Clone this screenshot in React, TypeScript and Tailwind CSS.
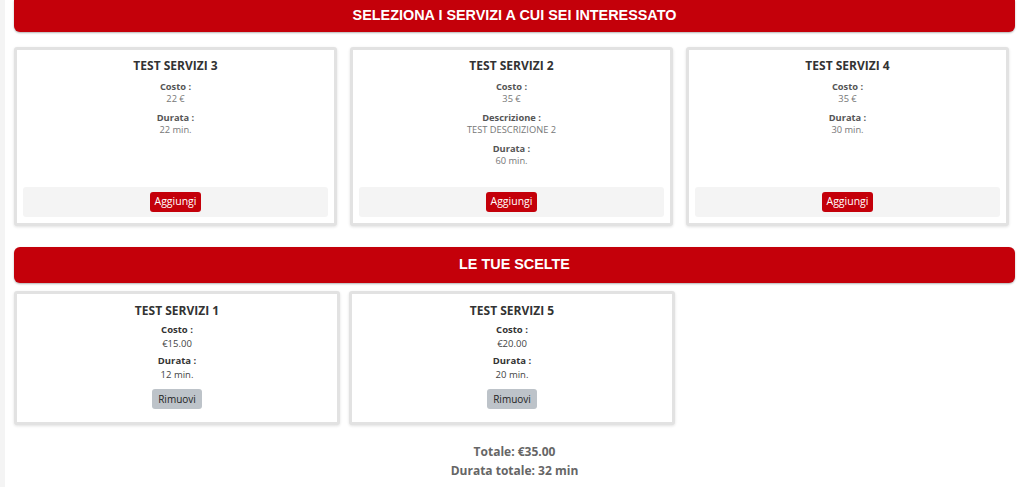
import React from 'react';

interface Field {
  label: string;
  value: string;
}

interface Service {
  name: string;
  fields: Field[];
}

const available: Service[] = [
  { name: 'TEST SERVIZI 3', fields: [{ label: 'Costo :', value: '22 €' }, { label: 'Durata :', value: '22 min.' }] },
  {
    name: 'TEST SERVIZI 2',
    fields: [
      { label: 'Costo :', value: '35 €' },
      { label: 'Descrizione :', value: 'TEST DESCRIZIONE 2' },
      { label: 'Durata :', value: '60 min.' },
    ],
  },
  { name: 'TEST SERVIZI 4', fields: [{ label: 'Costo :', value: '35 €' }, { label: 'Durata :', value: '30 min.' }] },
];

const chosen: Service[] = [
  { name: 'TEST SERVIZI 1', fields: [{ label: 'Costo :', value: '€15.00' }, { label: 'Durata :', value: '12 min.' }] },
  { name: 'TEST SERVIZI 5', fields: [{ label: 'Costo :', value: '€20.00' }, { label: 'Durata :', value: '20 min.' }] },
];

const Banner: React.FC<{ title: string; first?: boolean }> = ({ title, first = false }) => (
  <div
    className={`flex items-center justify-center bg-[#c4000a] text-white font-bold text-[14.4px] shadow-[0_1px_2px_rgba(0,0,0,0.3)] ${
      first ? 'h-[32px] rounded-b-[6px]' : 'h-[36px] rounded-[6px]'
    }`}
    style={{ fontFamily: '"Liberation Sans", Arial, sans-serif' }}
  >
    {title}
  </div>
);

const AvailableCard: React.FC<{ service: Service }> = ({ service }) => (
  <div className="flex flex-col border-[3px] border-[#e2e2e2] rounded-[3px] bg-white px-[6px] pt-[8px] pb-[6px] shadow-[0_1px_3px_rgba(0,0,0,0.12)]">
    <div className="text-center text-[12px] font-bold text-[#333] leading-[16px]">{service.name}</div>
    <div className="mt-[7px] flex flex-col gap-[7px] text-center text-[9.3px] leading-[12px]">
      {service.fields.map(f => (
        <div key={f.label}>
          <div className="font-bold text-[#555]">{f.label}</div>
          <div className="text-[#777]">{f.value}</div>
        </div>
      ))}
    </div>
    <div className="mt-auto pt-[20px]">
      <div className="flex justify-center items-center h-[30px] bg-[#f4f4f4] rounded-[3px]">
        <button className="h-[20px] px-[5px] bg-[#c4000a] text-white text-[10.5px] rounded-[3px]">Aggiungi</button>
      </div>
    </div>
  </div>
);

const ChosenCard: React.FC<{ service: Service }> = ({ service }) => (
  <div className="flex flex-col items-center border-[3px] border-[#e2e2e2] rounded-[3px] bg-white pt-[9px] pb-[13px] shadow-[0_1px_3px_rgba(0,0,0,0.12)]">
    <div className="text-center text-[12px] font-bold text-[#333] leading-[16px]">{service.name}</div>
    <div className="mt-[4px] flex flex-col gap-[3px] text-center text-[9.5px] leading-[14px]">
      {service.fields.map(f => (
        <div key={f.label}>
          <div className="font-bold text-[#333]">{f.label}</div>
          <div className="text-[#444]">{f.value}</div>
        </div>
      ))}
    </div>
    <button className="mt-[7px] h-[20px] px-[6px] bg-[#bdc3c9] text-[#222] text-[10px] rounded-[3px]">Rimuovi</button>
  </div>
);

const App: React.FC = () => {
  return (
    <div
      className="min-h-screen bg-[#f4f4f4] pl-[5px]"
      style={{ fontFamily: '"Open Sans", "Noto Sans", sans-serif' }}
    >
      <div className="min-h-screen bg-white pl-[9px] pr-[9px]">
        <Banner title="SELEZIONA I SERVIZI A CUI SEI INTERESSATO" first />
        <div className="grid grid-cols-3 gap-[13px] pr-[6px] mt-[15px]">
          {available.map(s => (
            <AvailableCard key={s.name} service={s} />
          ))}
        </div>

        <div className="mt-[21px]">
          <Banner title="LE TUE SCELTE" />
        </div>
        <div className="grid grid-cols-3 gap-[9px] pr-[5px] mt-[8px]">
          {chosen.map(s => (
            <ChosenCard key={s.name} service={s} />
          ))}
        </div>

        <div className="mt-[17px] text-center text-[12px] font-bold text-[#666] leading-[19px]">
          <div>Totale: €35.00</div>
          <div>Durata totale: 32 min</div>
        </div>
      </div>
    </div>
  );
};

export default App;
